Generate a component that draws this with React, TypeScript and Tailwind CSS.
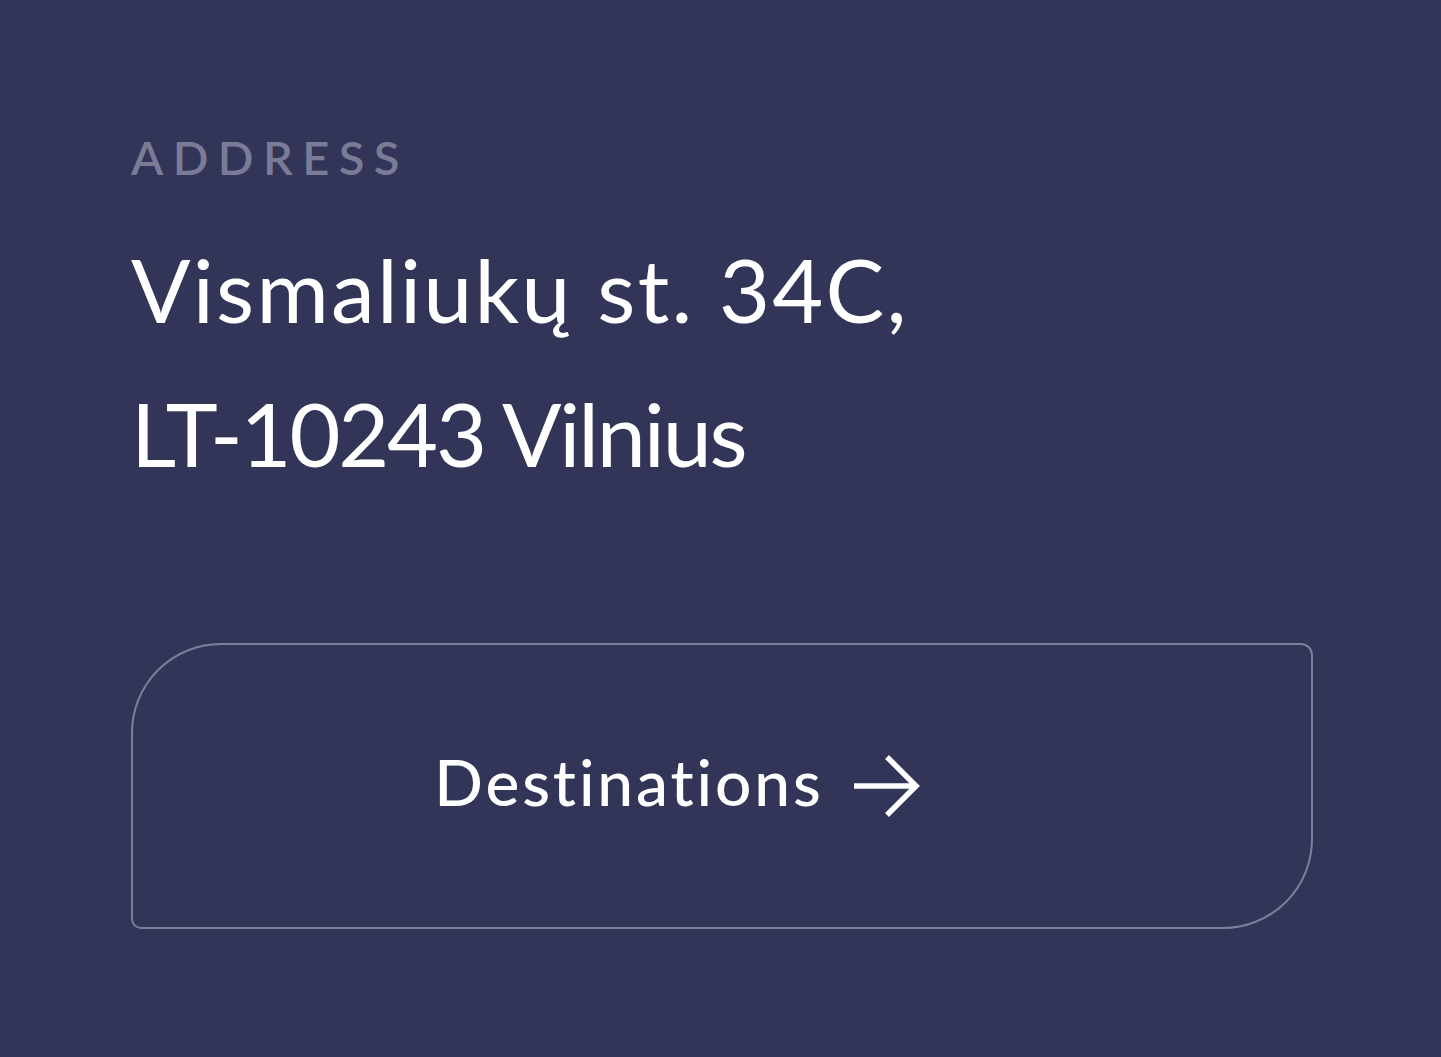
export default function App() {
  return (
    <div className="min-h-[1057px] w-full bg-[#323558] pl-[131px] pr-[128px] pt-[131px] font-['Lato',sans-serif]">
      <p className="text-[47px] font-semibold uppercase leading-[52px] tracking-[0.2em] text-[#7a7b97]">Address</p>
      <address className="mt-[34px] text-[88px] font-normal not-italic leading-[144px] text-white">
        <span className="block tracking-[0.025em]">Vismaliukų st. 34C,</span>
        <span className="block tracking-[-0.025em]">LT-10243 Vilnius</span>
      </address>
      <a
        href="#"
        className="mt-[138px] flex h-[286px] w-[1182px] items-center justify-center gap-[30px] rounded-tl-[90px] rounded-tr-[12px] rounded-br-[90px] rounded-bl-[10px] border-2 border-[#7d7e9b] pb-[8px] pr-[90px] text-[64px] font-medium tracking-[0.045em] text-white"
      >
        Destinations
        <svg width="66" height="64" viewBox="0 0 66 64" fill="none" stroke="currentColor" strokeWidth="5.5" className="mt-[8px]">
          <path d="M0 32H62" />
          <path d="M33 3L62 32L33 61" />
        </svg>
      </a>
    </div>
  );
}
